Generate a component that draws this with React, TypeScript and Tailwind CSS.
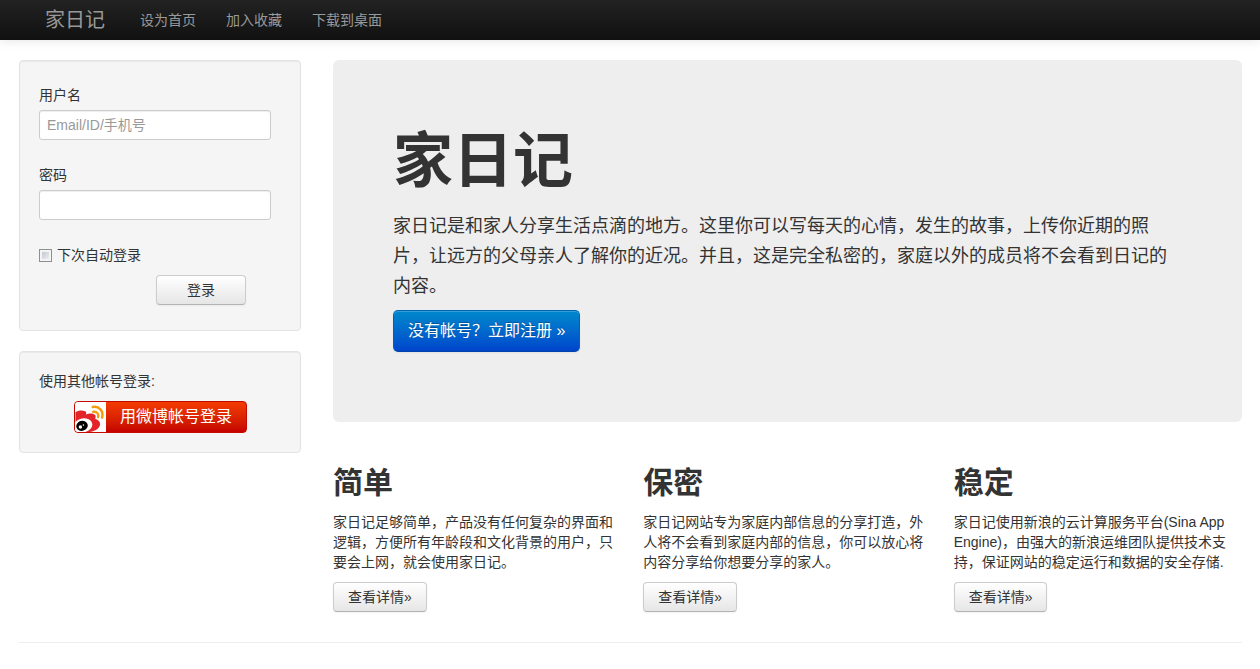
import type { ReactNode } from 'react'
import clsx from 'clsx'

interface Feature {
  title: string
  text: string
}

const navLinks = ['设为首页', '加入收藏', '下载到桌面']

const features: Feature[] = [
  {
    title: '简单',
    text: '家日记足够简单，产品没有任何复杂的界面和逻辑，方便所有年龄段和文化背景的用户，只要会上网，就会使用家日记。',
  },
  {
    title: '保密',
    text: '家日记网站专为家庭内部信息的分享打造，外人将不会看到家庭内部的信息，你可以放心将内容分享给你想要分享的家人。',
  },
  {
    title: '稳定',
    text: '家日记使用新浪的云计算服务平台(Sina App Engine)，由强大的新浪运维团队提供技术支持，保证网站的稳定运行和数据的安全存储.',
  },
]

const buttonStyle =
  'h-[30px] rounded border border-[#cccccc] border-b-[#b3b3b3] bg-linear-to-b from-white to-[#e6e6e6] px-[14px] text-sm leading-5 text-[#333333] shadow-[0_1px_2px_rgba(0,0,0,0.05)] hover:to-[#d9d9d9]'

const inputStyle =
  'block h-[30px] w-[232px] rounded-[3px] border border-[#cccccc] bg-white px-[7px] text-sm leading-5 text-[#555555] shadow-[inset_0_1px_1px_rgba(0,0,0,0.075)] outline-none placeholder:text-[#999999] focus:border-[#52a8ec]'

function Well({ className, children }: { className?: string; children: ReactNode }) {
  return (
    <div
      className={clsx(
        'rounded border border-[#e3e3e3] bg-[#f5f5f5] px-[19px] shadow-[inset_0_1px_1px_rgba(0,0,0,0.05)]',
        className,
      )}
    >
      {children}
    </div>
  )
}

function WeiboLogo() {
  return (
    <svg viewBox="0 0 31 30" className="h-[30px] w-[31px] shrink-0 bg-white" aria-hidden="true">
      <path
        d="M0.5 20V10.2C3 8.6 7 8 10.2 9.3C11.3 9.8 11.4 11 11 12.4C14 11 18.6 11 20.2 13C21 14.2 20.5 15.8 20.2 17C23.4 17.8 25.4 19.8 25 22.7C24.3 27 18.8 30 13 30H6Z"
        fill="#e32529"
      />
      <ellipse cx="8" cy="23.4" rx="9.4" ry="7" fill="#ffffff" transform="rotate(-10 8 23.4)" />
      <ellipse cx="7" cy="23.8" rx="5.8" ry="5" fill="#000000" transform="rotate(-18 7 23.8)" />
      <circle cx="5.4" cy="25" r="1.7" fill="#ffffff" />
      <circle cx="8.4" cy="23" r="0.8" fill="#ffffff" />
      <path
        d="M17.7 5C23.9 3.6 28.9 9.2 27.1 15.6M18.2 9.8C21.7 9.2 24.1 12 23.1 15.2"
        fill="none"
        stroke="#f59b0b"
        strokeWidth="2.4"
        strokeLinecap="round"
      />
    </svg>
  )
}

function Navbar() {
  return (
    <header className="flex h-10 items-center bg-linear-to-b from-[#222222] to-[#111111] pl-[45px] text-[#999999] shadow-[0_1px_10px_rgba(0,0,0,0.1)]">
      <a href="#" className="mr-5 text-xl leading-5">
        家日记
      </a>
      <nav className="flex">
        {navLinks.map((label) => (
          <a key={label} href="#" className="px-[15px] text-sm leading-5 hover:text-white">
            {label}
          </a>
        ))}
      </nav>
    </header>
  )
}

function LoginForm() {
  return (
    <Well className="pt-6 pb-[25px]">
      <form onSubmit={(e) => e.preventDefault()}>
        <label htmlFor="username" className="mb-[5px] block">
          用户名
        </label>
        <input id="username" type="text" placeholder="Email/ID/手机号" className={inputStyle} />
        <label htmlFor="password" className="mt-[25px] mb-[5px] block">
          密码
        </label>
        <input id="password" type="password" className={inputStyle} />
        <label className="mt-[25px] flex items-center gap-[5px]">
          <input
            type="checkbox"
            className="size-[13px] appearance-none border border-[#8e8f8f] bg-linear-to-br from-[#b9bfc9] to-[#f6f6f6] shadow-[inset_0_0_0_2px_#f4f4f4] checked:bg-[#0088cc]"
          />
          下次自动登录
        </label>
        <div className="mt-[10px] flex justify-end pr-[35px]">
          <button type="submit" className={clsx(buttonStyle, 'w-[90px]')}>
            登录
          </button>
        </div>
      </form>
    </Well>
  )
}

function WeiboLogin() {
  return (
    <Well className="py-[19px]">
      <p className="mb-[10px]">使用其他帐号登录:</p>
      <div className="flex pl-[35px]">
        <button
          type="button"
          className="flex h-8 items-center overflow-hidden rounded border border-[#c40b00] bg-linear-to-b from-[#f33b00] to-[#c50000] text-base leading-5 text-white"
        >
          <WeiboLogo />
          <span className="px-[14px]">用微博帐号登录</span>
        </button>
      </div>
    </Well>
  )
}

function Hero() {
  return (
    <section className="rounded-md bg-[#eeeeee] p-[60px] pb-[70px]">
      <h1 className="mb-[7px] text-[60px] leading-[84px] font-bold">家日记</h1>
      <p className="mb-[9px] text-lg leading-[30px]">
        家日记是和家人分享生活点滴的地方。这里你可以写每天的心情，发生的故事，上传你近期的照片，让远方的父母亲人了解你的近况。并且，这是完全私密的，家庭以外的成员将不会看到日记的内容。
      </p>
      <button
        type="button"
        className="block h-[42px] rounded-[5px] border border-[#0064b4] border-b-[#0044aa] bg-linear-to-b from-[#0088cc] to-[#0044cc] px-[14px] text-base leading-5 text-white shadow-[inset_0_1px_0_rgba(255,255,255,0.2),0_1px_2px_rgba(0,0,0,0.05)] [text-shadow:0_-1px_0_rgba(0,0,0,0.25)]"
      >
        没有帐号？立即注册 »
      </button>
    </section>
  )
}

function FeatureColumn({ title, text }: Feature) {
  return (
    <section>
      <h2 className="mb-2 text-3xl leading-[42px] font-bold">{title}</h2>
      <p className="mb-[10px]">{text}</p>
      <button type="button" className={buttonStyle}>
        查看详情»
      </button>
    </section>
  )
}

export default function App() {
  return (
    <div className="bg-white font-['Liberation_Sans','Noto_Sans_CJK_SC',sans-serif] text-sm leading-5 text-[#333333]">
      <Navbar />
      <div className="pt-5 pr-[18px] pl-[19px]">
        <div className="flex gap-8">
          <aside className="flex w-[282px] shrink-0 flex-col gap-5">
            <LoginForm />
            <WeiboLogin />
          </aside>
          <main className="min-w-0 flex-1">
            <Hero />
            <div className="mt-10 grid grid-cols-3 gap-[22px]">
              {features.map((feature) => (
                <FeatureColumn key={feature.title} {...feature} />
              ))}
            </div>
          </main>
        </div>
        <hr className="mt-[30px] border-[#eeeeee]" />
      </div>
    </div>
  )
}
